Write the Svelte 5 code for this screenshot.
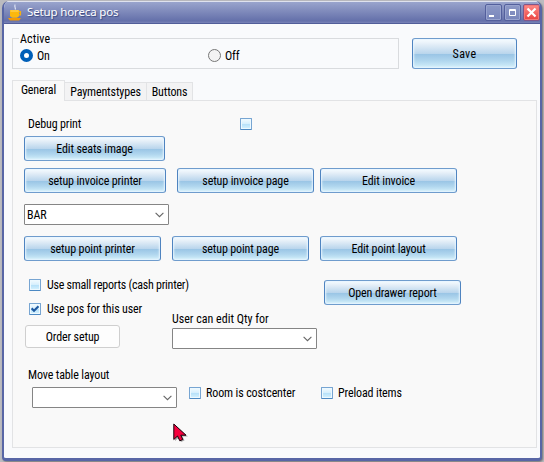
<script>
  let active = $state('on');
  const tabs = ['General', 'Paymentstypes', 'Buttons'];
  let current = $state('General');
</script>

{#snippet glass(text, cls)}
  <button class="glass {cls}"><span>{text}</span></button>
{/snippet}

{#snippet check(text, checked, cls)}
  <label class="check {cls}">
    <span class="box">
      {#if checked}
        <svg width="8" height="8" viewBox="0 0 8 8"><path d="M.6 3.3 3 5.7 7.5 1.2" fill="none" stroke="#1d58a0" stroke-width="2.1" /></svg>
      {/if}
    </span>
    {#if text}<span class="t">{text}</span>{/if}
  </label>
{/snippet}

{#snippet combo(value)}
  <div class="combo">
    <span class="t">{value}</span>
    <svg width="9" height="6" viewBox="0 0 9 6"><path d="M.6 .8 4.5 4.7 8.4 .8" fill="none" stroke="#666" stroke-width="1.1" /></svg>
  </div>
{/snippet}

<div class="screen">
  <div class="window">
    <header>
      <svg class="cup" width="15" height="17" viewBox="0 0 15 17">
        <path d="M7 5.5C8.6 4 5.6 3 7.2.5" fill="none" stroke="#d5dcf0" stroke-width="1.3" />
        <path d="M10 7.6h2.400v3.300H10" fill="none" stroke="#f4ae12" stroke-width="1.4" />
        <path d="M2 6h9v5.300q0 2.400-2.500 2.400h-4Q2 13.700 2 11.300z" fill="#fcb80d" />
        <path d="M2.500 6.500h8v1h-8z" fill="#ffd96b" />
        <path d="M0 14h13l-1.800 2.400H1.800z" fill="#f59a04" />
      </svg>
      <h1>Setup horeca pos</h1>
      <div class="controls">
        <button aria-label="Minimize"><svg width="15" height="15"><path d="M3 11h5" stroke="#fff" stroke-width="2" /></svg></button>
        <button aria-label="Maximize"><svg width="15" height="15"><path d="M4.500 4.500h6v6h-6zM4 5.500h7" fill="none" stroke="#fff" stroke-width="1" /></svg></button>
        <button class="close" aria-label="Close"><svg width="15" height="15"><path d="m3.500 3.500 8 8m0-8-8 8" stroke="#fff" stroke-width="2.200" /></svg></button>
      </div>
    </header>

    <main>
      <div class="top">
        <fieldset>
          <legend>Active</legend>
          <label class="radio on"><input type="radio" bind:group={active} value="on" /><span class="t">On</span></label>
          <label class="radio"><input type="radio" bind:group={active} value="off" /><span class="t">Off</span></label>
        </fieldset>
        {@render glass('Save', 'save')}
      </div>

      <nav>
        {#each tabs as tab}
          <button class="tab {tab.toLowerCase()}" class:active={tab === current} onclick={() => (current = tab)}>{tab}</button>
        {/each}
      </nav>

      <section>
        <div class="row debug"><span class="t">Debug print</span>{@render check('', false, '')}</div>
        <div class="row seats">{@render glass('Edit seats image', 'w141')}</div>
        <div class="row invoice">
          {@render glass('setup invoice printer', 'w142')}
          {@render glass('setup invoice page', 'page')}
          {@render glass('Edit invoice', 'edit')}
        </div>
        <div class="row bar">{@render combo('BAR')}</div>
        <div class="row point">
          {@render glass('setup point printer', '')}
          {@render glass('setup point page', '')}
          {@render glass('Edit point layout', '')}
        </div>
        <div class="options">
          <div class="left">
            {@render check('Use small reports (cash printer)', false, 'reports')}
            {@render check('Use pos for this user', true, 'pos')}
            <button class="plain">Order setup</button>
          </div>
          <div class="mid">
            <span class="t qty">User can edit Qty for</span>
            {@render combo('')}
          </div>
          {@render glass('Open drawer report', 'drawer')}
        </div>
        <div class="movelabel t">Move table layout</div>
        <div class="row move">
          {@render combo('')}
          {@render check('Room is costcenter', false, 'room')}
          {@render check('Preload items', false, 'preload')}
        </div>
      </section>
    </main>
  </div>

  <svg class="cursor" width="17" height="20" viewBox="0 0 17 20">
    <path d="M2 2v16l3.500-3 2.500 4 3.500-1.500-2-4H15z" fill="#777" opacity=".6" />
    <path d="M.8 1v15.500l3.700-3.500 2.300 4.800 3-1.300-2-4.300H13z" fill="#f5003d" stroke="#17000a" stroke-width="1" />
  </svg>
</div>

<style>
  :global(body) { margin: 0; background: #b9b9bd; }
  * { box-sizing: border-box; }
  button { font: inherit; letter-spacing: inherit; color: inherit; padding: 0; margin: 0; }
  svg { display: block; flex: none; }
  .screen {
    position: relative; width: 544px; height: 462px; padding: 1px 2px 1px 2px; overflow: hidden;
    background: #bbbbc0; color: #000;
    font: 400 12px/12px Roboto, "Liberation Sans", sans-serif; font-stretch: 87.5%; letter-spacing: -.13px; white-space: nowrap;
  }
  .window {
    width: 540px; height: 460px; background: #f9fafc; border: 2px solid #5866a6; border-top: 0; border-bottom-width: 3px;
    border-radius: 7px 7px 4px 4px; overflow: hidden; box-shadow: 1px 1px 2px #777;
  }
  header {
    height: 23px; margin: 0 -2px; padding: 3px 2px 0 6px; display: flex; border-top: 1px solid #dfe2ee;
    border-bottom: 1px solid #515d99; background: linear-gradient(#99a4cd, #7f8abb 45%, #6470aa 90%, #7983b7);
  }
  .cup { margin-top: -1px; }
  h1 { margin: 0 0 0 4px; font: 11.5px/14px "Noto Sans", sans-serif; letter-spacing: -.14px; color: #fff; text-shadow: 1px 1px 1px #38477f; }
  .controls { margin: -1px 0 0 auto; display: flex; gap: 2px; }
  .controls button { width: 17px; height: 17px; border: 1px solid #535f9c; border-radius: 2px; background: linear-gradient(#8c98c6, #7986bb); box-shadow: inset 0 0 0 1px #98a3ce; display: grid; place-items: center; }
  .controls .close { background: linear-gradient(#ff8c89, #e9413f); box-shadow: inset 0 0 0 1px #f37776; border-color: #80568a; }
  main { padding: 14px 4px 0 8px; }
  .top { display: flex; height: 42px; }
  fieldset { position: relative; width: 387px; height: 31px; margin: 0; padding: 11px 0 0 7px; border: 1px solid #d9dbde; display: flex; min-width: 0; }
  legend { position: absolute; left: 6px; top: -6px; padding: 0 1px; background: #f9fafc; letter-spacing: .15px; }
  .radio { display: flex; align-items: center; height: 13px; width: 188px; margin-top: -1px; }
  .radio input { appearance: none; width: 13px; height: 13px; margin: 0; border: 1px solid #777; border-radius: 50%; background: #f3f3f3; }
  .radio input:checked { border: 4px solid #005fb8; background: #fff; }
  .radio .t { margin-left: 4px; }
  .glass {
    display: flex; align-items: center; justify-content: center; flex: none; width: 137px; height: 25px;
    border: 1px solid #6f9ccd; border-left-color: #4f84c0; border-right-color: #4f84c0; border-radius: 3px;
    background: linear-gradient(#fafdff, #dbe9f5 25%, #b9d5ec 51%, #99c4e5 52%, #b0d6ee 75%, #d4f0fb);
    box-shadow: inset 0 0 2px 1px #e7f5ff;
  }
  .save { width: 105px; height: 31px; margin-left: 13px; }
  .save span { letter-spacing: .3px; }
  .w141 { width: 141px; }
  .w142 { width: 142px; }
  nav { display: flex; align-items: flex-end; height: 21px; margin-bottom: -1px; position: relative; }
  .tab { height: 19px; border: 1px solid #e2e3e5; border-left: 0; background: #f3f3f4; text-align: center; }
  .general { width: 53px; }
  .paymentstypes { width: 82px; }
  .buttons { width: 46px; }
  .tab.active { height: 21px; background: #f9f9f9; border-left: 1px solid #e2e3e5; border-bottom: 0; padding-bottom: 2px; }
  section { height: 348px; width: 525px; border: 1px solid #e2e3e5; background: #f9f9f9; padding: 17px 0 0 11px; }
  .row { display: flex; }
  .debug { height: 18px; padding-left: 4px; }
  .debug .t { width: 212px; }
  .seats { height: 32px; }
  .invoice { height: 36px; }
  .page { margin-left: 11px; }
  .edit { margin-left: 6px; }
  .bar { height: 32px; }
  .point { gap: 11px; height: 43px; }
  .check { display: flex; height: 12px; align-items: center; }
  .box { width: 12px; height: 12px; flex: none; border: 1px solid #77a5d2; border-bottom-color: #4c89c3; border-radius: 1px; padding: 1px; background: linear-gradient(#f2fbff, #d5effd 48%, #b5e0f9 50%, #d6f3ff); box-shadow: inset 0 0 0 1px #edf9ff; }
  .check .t { margin-left: 6px; }
  .reports .t { letter-spacing: -.25px; }
  .combo { width: 145px; height: 21px; display: flex; align-items: center; justify-content: space-between; border: 1px solid #858585; border-radius: 1px; background: #fff; padding: 0 4px 0 2px; flex: none; }
  .options { display: flex; height: 90px; }
  .left { width: 148px; }
  .reports { margin-left: 5px; }
  .pos { margin: 12px 0 10px 5px; }
  .plain { display: block; width: 95px; height: 23px; margin-left: 1px; background: #fdfdfd; border: 1px solid #cfcfcf; border-radius: 3px; }
  .mid { width: 145px; padding-top: 34px; }
  .qty { display: block; margin-bottom: 3px; letter-spacing: 0; }
  .drawer { margin: 1px 0 0 7px; }
  .movelabel { padding-left: 4px; height: 18px; }
  .move { padding-left: 8px; }
  .room { margin-left: 12px; width: 132px; }
  .room .t, .preload .t { margin-left: 5px; }
  .cursor { position: absolute; left: 173px; top: 423px; }
</style>
